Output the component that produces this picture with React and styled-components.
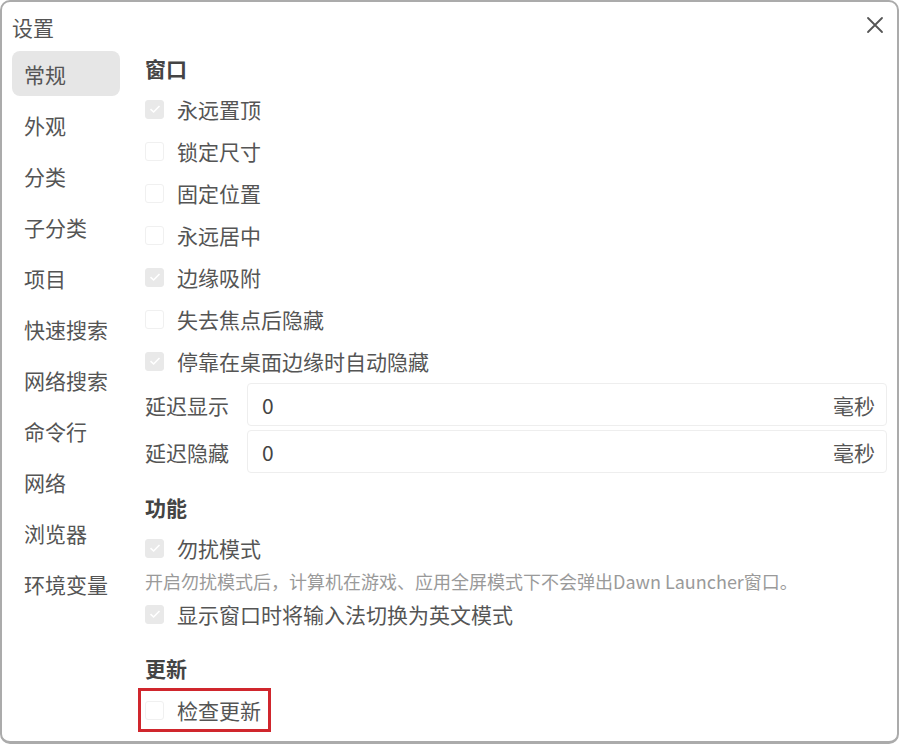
import React, { useState } from 'react'
import styled, { createGlobalStyle } from 'styled-components'

const GlobalStyle = createGlobalStyle`
  html, body {
    margin: 0;
    padding: 0;
    background: #ffffff;
  }
  * {
    box-sizing: border-box;
  }
  body {
    font-family: "Noto Sans CJK SC", "Noto Sans", "Liberation Sans", sans-serif;
    color: #555555;
  }
`;

const Window = styled.div`
  width: 899px;
  height: 744px;
  border: 2px solid #ababab;
  border-bottom-width: 3px;
  border-radius: 10px;
  background: #ffffff;
  overflow: hidden;
  display: flex;
  flex-direction: column;
`;

const TitleBar = styled.div`
  height: 49px;
  display: flex;
  align-items: center;
  justify-content: space-between;
  padding: 0 8px 0 10px;
`;

const Title = styled.div`
  font-size: 21px;
  color: #555555;
`;

const CloseButton = styled.button`
  width: 28px;
  height: 28px;
  margin-bottom: 4px;
  border: none;
  background: transparent;
  padding: 0;
  display: flex;
  align-items: center;
  justify-content: center;
  cursor: pointer;
`;

const Body = styled.div`
  flex: 1;
  display: flex;
  gap: 25px;
  padding: 0 10px;
`;

const Sidebar = styled.nav`
  width: 108px;
  flex-shrink: 0;
  display: flex;
  flex-direction: column;
  gap: 6px;
`;

const NavItem = styled.div`
  height: 45px;
  display: flex;
  align-items: center;
  padding-left: 12px;
  border-radius: 8px;
  font-size: 21px;
  color: #555555;
  background: ${(p) => (p.active ? '#e6e6e6' : 'transparent')};
  white-space: nowrap;
`;

const Content = styled.div`
  flex: 1;
  display: flex;
  flex-direction: column;
  padding-top: 3px;
`;

const SectionTitle = styled.div`
  height: 28px;
  line-height: 28px;
  font-size: 21px;
  font-weight: 700;
  color: #444444;
  margin-top: ${(p) => p.gapTop || 0}px;
  margin-bottom: 6px;
`;

const CheckRow = styled.label`
  height: ${(p) => p.h || 42}px;
  display: flex;
  align-items: center;
  gap: 13px;
  font-size: 21px;
  color: #555555;
`;

const Highlight = styled.div`
  align-self: flex-start;
  display: flex;
  height: 44px;
  align-items: center;
  margin-left: -7px;
  padding: 0 7px 0 4px;
  border: 3px solid #d0262d;
`;

const Box = styled.span`
  width: 19px;
  height: 19px;
  border-radius: 3px;
  flex-shrink: 0;
  display: flex;
  align-items: center;
  justify-content: center;
  background: ${(p) => (p.checked ? '#e9e9e9' : '#ffffff')};
  border: 1px solid ${(p) => (p.checked ? '#e9e9e9' : '#f0f0f0')};
`;

const Hint = styled.div`
  height: 24px;
  line-height: 24px;
  font-size: 18px;
  color: #9a9a9a;
  white-space: nowrap;
`;

const InputRows = styled.div`
  display: flex;
  flex-direction: column;
  gap: 4px;
  margin-top: 1px;
`;

const InputRow = styled.div`
  display: flex;
  align-items: center;
  gap: 18px;
`;

const InputLabel = styled.div`
  width: 84px;
  font-size: 21px;
  color: #555555;
  white-space: nowrap;
`;

const InputBox = styled.div`
  flex: 1;
  height: 43px;
  display: flex;
  align-items: center;
  justify-content: space-between;
  padding: 0 11px 0 14px;
  border: 1px solid #eeeeee;
  border-radius: 4px;
  font-size: 21px;
  color: #444444;
`;

const Unit = styled.span`
  color: #555555;
`;

const Check = ({ checked, label, h }) => (
  <CheckRow h={h}>
    <Box checked={checked}>
      {checked && (
        <svg width="12" height="10" viewBox="0 0 12 10">
          <path d="M1.5 5.2 L4.6 8 L10.5 2" fill="none" stroke="#ffffff" strokeWidth="1.6" />
        </svg>
      )}
    </Box>
    {label}
  </CheckRow>
)

const navItems = ['常规', '外观', '分类', '子分类', '项目', '快速搜索', '网络搜索', '命令行', '网络', '浏览器', '环境变量']

const windowOptions = [
  { label: '永远置顶', checked: true },
  { label: '锁定尺寸', checked: false },
  { label: '固定位置', checked: false },
  { label: '永远居中', checked: false },
  { label: '边缘吸附', checked: true },
  { label: '失去焦点后隐藏', checked: false },
  { label: '停靠在桌面边缘时自动隐藏', checked: true },
]

const App = () => {
  const [active] = useState('常规')
  return (
    <>
      <GlobalStyle />
      <Window>
        <TitleBar>
          <Title>设置</Title>
          <CloseButton>
            <svg width="18" height="18" viewBox="0 0 18 18">
              <path d="M2 2 L16 16 M16 2 L2 16" stroke="#555555" strokeWidth="1.8" strokeLinecap="round" />
            </svg>
          </CloseButton>
        </TitleBar>
        <Body>
          <Sidebar>
            {navItems.map((item) => (
              <NavItem key={item} active={item === active}>{item}</NavItem>
            ))}
          </Sidebar>
          <Content>
            <SectionTitle>窗口</SectionTitle>
            {windowOptions.map((o) => (
              <Check key={o.label} checked={o.checked} label={o.label} />
            ))}
            <InputRows>
              <InputRow>
                <InputLabel>延迟显示</InputLabel>
                <InputBox>0<Unit>毫秒</Unit></InputBox>
              </InputRow>
              <InputRow>
                <InputLabel>延迟隐藏</InputLabel>
                <InputBox>0<Unit>毫秒</Unit></InputBox>
              </InputRow>
            </InputRows>
            <SectionTitle gapTop={20}>功能</SectionTitle>
            <Check checked label="勿扰模式" />
            <Hint>开启勿扰模式后，计算机在游戏、应用全屏模式下不会弹出Dawn Launcher窗口。</Hint>
            <Check checked label="显示窗口时将输入法切换为英文模式" />
            <SectionTitle gapTop={19}>更新</SectionTitle>
            <Highlight>
              <Check checked={false} label="检查更新" h={38} />
            </Highlight>
          </Content>
        </Body>
      </Window>
    </>
  )
}

export default App
